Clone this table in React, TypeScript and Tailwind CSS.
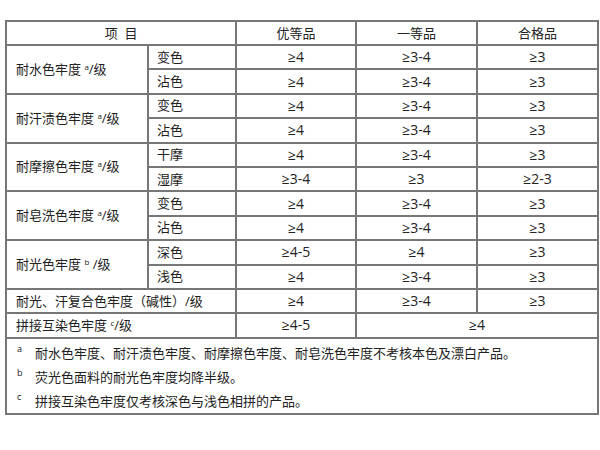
import React from 'react';

const rows: { group?: React.ReactNode; span?: number; sub: string; a: string; b: string; c: string }[] = [
  { group: <>耐水色牢度 <sup className="text-[8px]">a</sup>/级</>, span: 2, sub: '变色', a: '≥4', b: '≥3-4', c: '≥3' },
  { sub: '沾色', a: '≥4', b: '≥3-4', c: '≥3' },
  { group: <>耐汗渍色牢度 <sup className="text-[8px]">a</sup>/级</>, span: 2, sub: '变色', a: '≥4', b: '≥3-4', c: '≥3' },
  { sub: '沾色', a: '≥4', b: '≥3-4', c: '≥3' },
  { group: <>耐摩擦色牢度 <sup className="text-[8px]">a</sup>/级</>, span: 2, sub: '干摩', a: '≥4', b: '≥3-4', c: '≥3' },
  { sub: '湿摩', a: '≥3-4', b: '≥3', c: '≥2-3' },
  { group: <>耐皂洗色牢度 <sup className="text-[8px]">a</sup>/级</>, span: 2, sub: '变色', a: '≥4', b: '≥3-4', c: '≥3' },
  { sub: '沾色', a: '≥4', b: '≥3-4', c: '≥3' },
  { group: <>耐光色牢度 <sup className="text-[8px]">b</sup> /级</>, span: 2, sub: '深色', a: '≥4-5', b: '≥4', c: '≥3' },
  { sub: '浅色', a: '≥4', b: '≥3-4', c: '≥3' },
];

const td = 'border-2 border-[#777] px-0 py-0';
const num = `${td} text-center text-[14px]`;

const notes = [
  ['a', '耐水色牢度、耐汗渍色牢度、耐摩擦色牢度、耐皂洗色牢度不考核本色及漂白产品。'],
  ['b', '荧光色面料的耐光色牢度均降半级。'],
  ['c', '拼接互染色牢度仅考核深色与浅色相拼的产品。'],
];

export default function App() {
  return (
    <div
      className="min-h-[450px] w-[600px] bg-white pl-[5px] pt-[20px] text-[13px] text-[#222]"
      style={{ fontFamily: '"Open Sans", "Noto Sans CJK SC", sans-serif' }}
    >
      <table className="w-[592px] table-fixed border-collapse border-2 border-[#777] leading-none">
        <colgroup>
          <col className="w-[142px]" />
          <col className="w-[88px]" />
          <col className="w-[120px]" />
          <col className="w-[121px]" />
          <col className="w-[121px]" />
        </colgroup>
        <tbody>
          <tr className="h-[24px]">
            <td colSpan={2} className={`${td} text-center`}>项&nbsp;&nbsp;目</td>
            <td className={`${td} text-center`}>优等品</td>
            <td className={`${td} text-center`}>一等品</td>
            <td className={`${td} text-center`}>合格品</td>
          </tr>
          {rows.map((r, i) => (
            <tr key={i} className="h-[24.4px]">
              {r.group && (
                <td rowSpan={r.span} className={`${td} pl-[9px]`}>{r.group}</td>
              )}
              <td className={`${td} pl-[8px]`}>{r.sub}</td>
              <td className={num}>{r.a}</td>
              <td className={num}>{r.b}</td>
              <td className={num}>{r.c}</td>
            </tr>
          ))}
          <tr className="h-[24.4px]">
            <td colSpan={2} className={`${td} pl-[9px]`}>耐光、汗复合色牢度（碱性）/级</td>
            <td className={num}>≥4</td>
            <td className={num}>≥3-4</td>
            <td className={num}>≥3</td>
          </tr>
          <tr className="h-[24.4px]">
            <td colSpan={2} className={`${td} pl-[9px]`}>拼接互染色牢度 <sup className="text-[8px]">c</sup>/级</td>
            <td className={num}>≥4-5</td>
            <td colSpan={2} className={num}>≥4</td>
          </tr>
          <tr>
            <td colSpan={5} className={`${td} pb-[0px] pt-[2px]`}>
              <div className="flex flex-col leading-[24px]">
                {notes.map(([k, t]) => (
                  <div key={k} className="flex">
                    <span className="w-[28px] -translate-y-[4px] pl-[10px] text-[9px]">{k}</span>
                    <span>{t}</span>
                  </div>
                ))}
              </div>
            </td>
          </tr>
        </tbody>
      </table>
    </div>
  );
}
